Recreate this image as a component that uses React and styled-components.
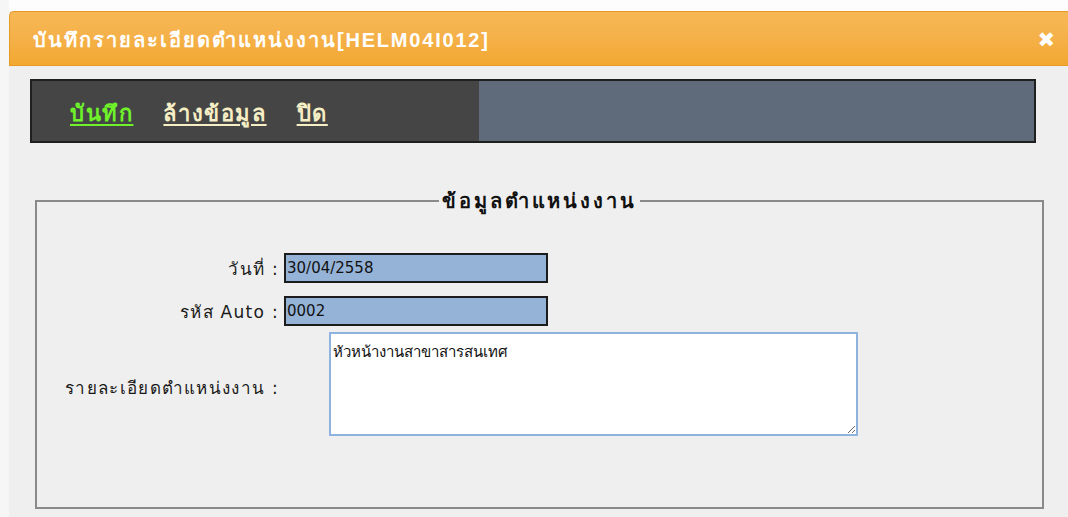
import React from 'react';
import styled, { createGlobalStyle } from 'styled-components';

const GlobalStyle = createGlobalStyle`
  html, body {
    margin: 0;
    padding: 0;
    background: #fdfdfd;
    overflow: hidden;
  }
  body {
    font-family: Tahoma, "DejaVu Sans", "Noto Sans", sans-serif;
  }
`

const Page = styled.div`
  width: 1068px;
  height: 517px;
  padding-top: 11px;
  padding-left: 9px;
  box-sizing: border-box;
  background: linear-gradient(to right, #f6f6f6 0, #f6f6f6 9px, #fdfdfd 9px);
`

const Dialog = styled.div`
  width: 1070px;
  height: 506px;
  background: #efefef;
  display: flex;
  flex-direction: column;
`

const TitleBar = styled.div`
  height: 55px;
  box-sizing: border-box;
  display: flex;
  align-items: center;
  justify-content: space-between;
  padding: 2px 24px 0 23px;
  border: 1px solid #e59a26;
  border-right: none;
  border-top-left-radius: 5px;
  background: linear-gradient(to bottom, #f7b855 0%, #f5b14a 45%, #f2a831 100%);
`

const Title = styled.h1`
  margin: 0;
  color: #ffffff;
  font-size: 20px;
  font-weight: bold;
  letter-spacing: 2px;
`

// form code sits after the Thai title in a tighter latin face
const TitleCode = styled.span`
  font-family: "Liberation Sans", Arial, sans-serif;
  letter-spacing: 1.8px;
`

const CloseButton = styled.span`
  color: #ffffff;
  font-size: 21px;
  font-weight: bold;
  font-family: "DejaVu Sans", sans-serif;
  line-height: 1;
  margin-top: 2px;
`

const Body = styled.div`
  padding: 13px 0 0 21px;
`

const Toolbar = styled.div`
  width: 1006px;
  height: 64px;
  box-sizing: border-box;
  border: 2px solid #1f1f1f;
  display: flex;
`

const MenuSide = styled.div`
  width: 447px;
  background: #454545;
  display: flex;
  align-items: center;
  gap: 30px;
  padding-left: 38px;
  padding-top: 4px;
  box-sizing: border-box;
`

const FillSide = styled.div`
  flex: 1;
  background: #5f6a7b;
`

const MenuLink = styled.a`
  font-family: "Liberation Serif", "DejaVu Serif", serif;
  font-size: 22px;
  font-weight: bold;
  letter-spacing: 1.6px;
  color: ${p => (p.$active ? '#6ff22a' : '#f6eec4')};
  text-decoration: underline;
  text-underline-offset: 3px;
  cursor: pointer;
`

const Fieldset = styled.fieldset`
  margin: 42px 0 0 5px;
  width: 1009px;
  height: 324px;
  box-sizing: border-box;
  border: 2px solid #8a8a8a;
  padding: 0;
`

const Legend = styled.legend`
  margin: 0 auto;
  padding: 0 3px;
  font-size: 20px;
  font-weight: bold;
  letter-spacing: 2.9px;
  color: #111;
`

const Form = styled.div`
  display: grid;
  grid-template-columns: 242px 1fr;
  column-gap: 5px;
  row-gap: 13px;
  padding-top: 36px;
  align-items: center;
`

const Label = styled.label`
  text-align: right;
  font-size: 17px;
  letter-spacing: 1.3px;
  color: #1a1a1a;
`

const Input = styled.input`
  width: 264px;
  height: 30px;
  box-sizing: border-box;
  border: 2px solid #1c1c1c;
  background: #95b3d7;
  padding: 0 1px;
  font-family: Tahoma, "DejaVu Sans", sans-serif;
  font-size: 15px;
  color: #111;
  outline: none;
`

const TextArea = styled.textarea`
  width: 529px;
  height: 104px;
  box-sizing: border-box;
  margin-left: 45px;
  margin-top: -7px;
  border: 2px solid #8db3de;
  background: #fff;
  padding: 6px 2px;
  font-family: Tahoma, "DejaVu Sans", sans-serif;
  font-size: 15px;
  color: #111;
  resize: both;
  outline: none;
`

export default function App() {
  return (
    <>
      <GlobalStyle />
      <Page>
        <Dialog>
          <TitleBar>
            <Title>
              บันทึกรายละเอียดตำแหน่งงาน<TitleCode>[HELM04I012]</TitleCode>
            </Title>
            <CloseButton>✖</CloseButton>
          </TitleBar>
          <Body>
            <Toolbar>
              <MenuSide>
                <MenuLink $active>บันทึก</MenuLink>
                <MenuLink>ล้างข้อมูล</MenuLink>
                <MenuLink>ปิด</MenuLink>
              </MenuSide>
              <FillSide />
            </Toolbar>
            <Fieldset>
              <Legend>ข้อมูลตำแหน่งงาน</Legend>
              <Form>
                <Label>วันที่ :</Label>
                <Input defaultValue="30/04/2558" readOnly />
                <Label>รหัส Auto :</Label>
                <Input defaultValue="0002" readOnly />
                <Label>รายละเอียดตำแหน่งงาน :</Label>
                <TextArea defaultValue="หัวหน้างานสาขาสารสนเทศ" />
              </Form>
            </Fieldset>
          </Body>
        </Dialog>
      </Page>
    </>
  )
}
